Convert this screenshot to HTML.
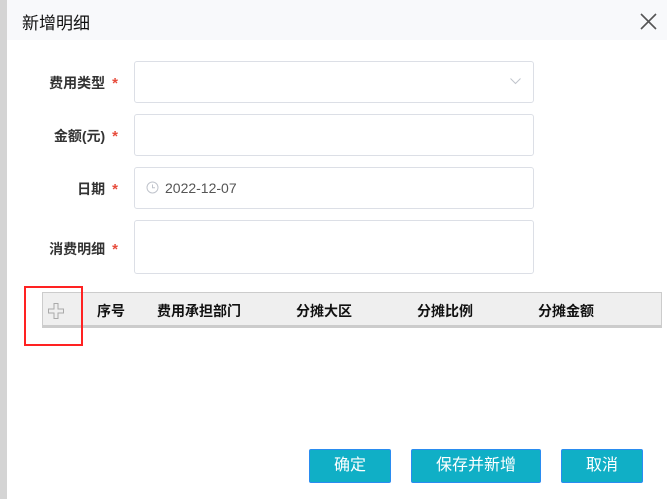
<!DOCTYPE html>
<html><head><meta charset="utf-8"><style>
*{margin:0;padding:0;box-sizing:border-box}
body{width:667px;height:499px;background:#fff;position:relative;overflow:hidden;font-family:"Liberation Sans","Noto Sans CJK SC",sans-serif}
.strip{position:absolute;left:0;top:0;width:7px;height:499px;background:#d4d4d4}
.hdr{position:absolute;left:7px;top:0;width:660px;height:40px;background:#f8f9fb}
.title{position:absolute;left:22px;top:9px;font-size:17px;color:#111}
.lbl{position:absolute;right:549px;font-size:14px;color:#333;font-weight:bold;white-space:nowrap}
.lbl b{color:#e74c3c;margin-left:7px;font-size:15px}
.inp{position:absolute;left:134px;width:400px;border:1px solid #dcdfe6;border-radius:3px;background:#fff}
.th{position:absolute;top:292px;left:42px;width:620px;height:36px;background:#efefef;border:1px solid #ccc;border-bottom:3px solid #ccc}
.th span{position:absolute;top:8px;font-size:14px;font-weight:bold;color:#111}
.red{position:absolute;left:24px;top:286px;width:59px;height:60px;border:2px solid #f22}
.btn{position:absolute;top:449px;height:34px;background:#10afc6;border:1px solid #2a8cf0;border-radius:2px;color:#fff;font-size:16px;text-align:center;line-height:32px}
</style></head><body>
<div class="strip"></div>
<div class="hdr"></div>
<div class="title">新增明细</div>
<svg style="position:absolute;left:640px;top:13px" width="17" height="17"><path d="M1 1L16 16M16 1L1 16" stroke="#555" stroke-width="1.6"/></svg>

<div class="lbl" style="top:73px">费用类型<b>*</b></div>
<div class="inp" style="top:61px;height:42px"><svg style="position:absolute;right:12px;top:16px" width="11" height="7"><path d="M0.5 0.5L5.5 5.5L10.5 0.5" stroke="#c0c4cc" fill="none"/></svg></div>

<div class="lbl" style="top:126px">金额(元)<b>*</b></div>
<div class="inp" style="top:114px;height:42px"></div>

<div class="lbl" style="top:179px">日期<b>*</b></div>
<div class="inp" style="top:167px;height:42px"><svg style="position:absolute;left:11px;top:13px" width="13" height="13"><circle cx="6.5" cy="6.5" r="5.5" stroke="#c0c4cc" fill="none"/><path d="M6.5 3.5V6.8H9" stroke="#c0c4cc" fill="none"/></svg><span style="position:absolute;left:30px;top:12px;font-size:14px;color:#555">2022-12-07</span></div>

<div class="lbl" style="top:239px">消费明细<b>*</b></div>
<div class="inp" style="top:220px;height:54px"></div>

<div class="th">
<svg style="position:absolute;left:4px;top:9px" width="18" height="18"><path d="M7 1.5H11V7H16.5V11H11V16.5H7V11H1.5V7H7Z" stroke="#aaa" fill="none"/></svg>
<span style="left:54px">序号</span>
<span style="left:114px">费用承担部门</span>
<span style="left:253px">分摊大区</span>
<span style="left:374px">分摊比例</span>
<span style="left:495px">分摊金额</span>
</div>
<div class="red"></div>

<div class="btn" style="left:309px;width:82px">确定</div>
<div class="btn" style="left:411px;width:130px">保存并新增</div>
<div class="btn" style="left:561px;width:82px">取消</div>
</body></html>
